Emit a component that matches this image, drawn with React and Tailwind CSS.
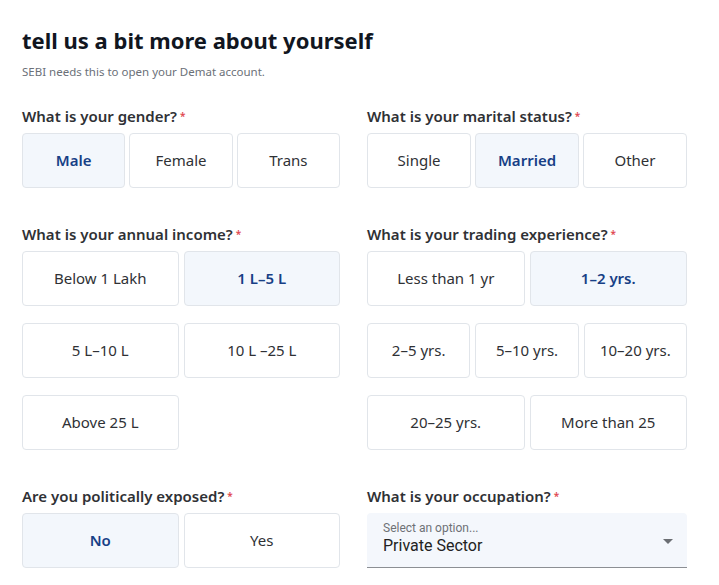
import React, { useState } from "react";

const Label = ({ children }) => (
  <p className="h-[20px] mb-[5px] text-[15px] leading-[16px] font-semibold text-[#2f3135] whitespace-nowrap">
    {children}
    <span className="ml-[3px] text-[10px] align-top text-[#e0464e]">*</span>
  </p>
);

const Option = ({ label, active, onClick }) => (
  <button
    onClick={onClick}
    className={
      active
        ? "h-[55px] rounded-[4px] border border-[#e1e5ea] bg-[#f3f7fc] text-[15px] font-semibold text-[#173f86]"
        : "h-[55px] rounded-[4px] border border-[#e1e5ea] bg-white text-[15px] text-[#2f3135]"
    }
  >
    {label}
  </button>
);

const Choice = ({ rows, value, onChange, tight }) => (
  <div className="flex flex-col gap-[17px]">
    {rows.map((row, i) => (
      <div
        key={i}
        className={
          row.cols === 3
            ? tight
              ? "grid grid-cols-3 gap-[4px]"
              : "grid grid-cols-3 gap-[5px]"
            : "grid grid-cols-2 gap-[5px]"
        }
      >
        {row.items.map((item) => (
          <Option key={item} label={item} active={value === item} onClick={() => onChange(item)} />
        ))}
      </div>
    ))}
  </div>
);

export default function App() {
  const [gender, setGender] = useState("Male");
  const [marital, setMarital] = useState("Married");
  const [income, setIncome] = useState("1 L–5 L");
  const [exp, setExp] = useState("1–2 yrs.");
  const [pep, setPep] = useState("No");

  return (
    <div className="min-h-screen bg-white" style={{ fontFamily: "'Noto Sans', sans-serif" }}>
      <div className="w-[665px] ml-[22px] pt-[24px]">
        <h1 className="text-[22px] leading-[32px] font-bold text-[#11161f]">tell us a bit more about yourself</h1>
        <p className="mt-[8px] text-[11.5px] leading-[16px] text-[#6b7078]">SEBI needs this to open your Demat account.</p>

        <div className="mt-[28px] grid grid-cols-[318px_320px] gap-x-[27px] gap-y-[38px]">
          <div>
            <Label>What is your gender?</Label>
            <Choice tight rows={[{ cols: 3, items: ["Male", "Female", "Trans"] }]} value={gender} onChange={setGender} />
          </div>
          <div>
            <Label>What is your marital status?</Label>
            <Choice tight rows={[{ cols: 3, items: ["Single", "Married", "Other"] }]} value={marital} onChange={setMarital} />
          </div>

          <div>
            <Label>What is your annual income?</Label>
            <Choice
              rows={[
                { cols: 2, items: ["Below 1 Lakh", "1 L–5 L"] },
                { cols: 2, items: ["5 L–10 L", "10 L –25 L"] },
                { cols: 2, items: ["Above 25 L"] },
              ]}
              value={income}
              onChange={setIncome}
            />
          </div>
          <div>
            <Label>What is your trading experience?</Label>
            <Choice
              rows={[
                { cols: 2, items: ["Less than 1 yr", "1–2 yrs."] },
                { cols: 3, items: ["2–5 yrs.", "5–10 yrs.", "10–20 yrs."] },
                { cols: 2, items: ["20–25 yrs.", "More than 25"] },
              ]}
              value={exp}
              onChange={setExp}
            />
          </div>

          <div>
            <Label>Are you politically exposed?</Label>
            <Choice rows={[{ cols: 2, items: ["No", "Yes"] }]} value={pep} onChange={setPep} />
          </div>
          <div>
            <Label>What is your occupation?</Label>
            <div className="relative h-[55px] rounded-t-[4px] border-b border-[#8c8f94] bg-[#f4f7fc] pl-[16px] pt-[8px]" style={{ fontFamily: "Roboto, sans-serif" }}>
              <p className="text-[12px] leading-[14px] text-[#6e7176]">Select an option...</p>
              <p className="mt-[1px] text-[16px] leading-[20px] text-[#222]">Private Sector</p>
              <svg className="absolute right-[14px] top-[26px]" width="10" height="5" viewBox="0 0 10 5">
                <path d="M0 0 L10 0 L5 5 Z" fill="#6b6e73" />
              </svg>
            </div>
          </div>
        </div>
      </div>
    </div>
  );
}
